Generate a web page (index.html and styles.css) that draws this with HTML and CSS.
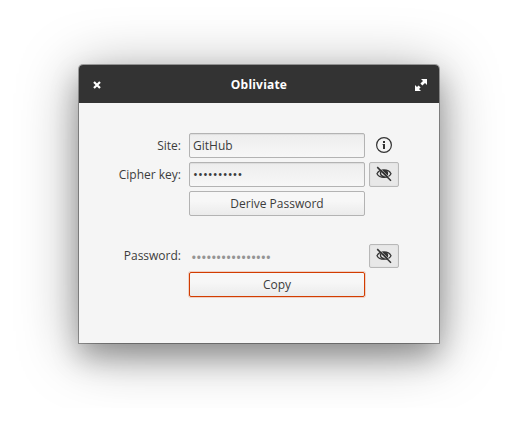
FILE: index.html
```html
<!DOCTYPE html>
<html lang="en">
<head>
<meta charset="utf-8">
<title>Obliviate</title>
<link rel="stylesheet" href="styles.css">
</head>
<body>
<svg width="0" height="0" class="defs">
  <symbol id="eye" viewBox="0 0 16 16">
    <path d="M1 7.7C3.5 2.7 12.5 2.7 15 7.7C12.5 12.4 3.5 12.4 1 7.7Z" fill="none" stroke="#333" stroke-width="1.3"/>
    <path d="M4.6 5.4C4 8.7 5.5 10.5 8.5 10.8" fill="none" stroke="#333" stroke-width="1.4"/>
    <path d="M6.5 4H10.5C12.6 5.5 12.8 8.5 11 10.6L8.5 8.5L6.2 6C6.6 5.6 6.8 4.8 6.5 4Z" fill="#333"/>
    <path d="M2.3 .4L16.1 14.2" stroke="#e8e8e8" stroke-width=".5"/>
    <path d="M1.2 1.1L15 14.8" stroke="#333" stroke-width="1.5"/>
  </symbol>
</svg>
<main class="window">
  <header class="titlebar">
    <svg class="close" viewBox="0 0 8 8"><path d="M1 1L7 7M7 1L1 7" stroke="#fff" stroke-width="2.2"/></svg>
    <h1>Obliviate</h1>
    <svg class="maximize" viewBox="0 0 12 12"><path d="M6 0H12V6L10 4L7.4 6.6L5.4 4.6L8 2ZM0 6L2 8L3.6 6.4L5.6 8.4L4 10L6 12H0Z" fill="#fff"/></svg>
  </header>
  <div class="form">
    <span class="label">Site:</span>
    <div class="entry">GitHub</div>
    <svg class="info" viewBox="0 0 16 16"><circle cx="8" cy="8" r="7.4" fill="none" stroke="#333" stroke-width="1.2"/><path d="M7 4H9V6H7ZM6.6 7H9V12H7V8H6.6Z" fill="#333"/></svg>

    <span class="label">Cipher key:</span>
    <div class="entry dots">••••••••••</div>
    <button class="toggle" aria-label="Show cipher key"><svg><use href="#eye"/></svg></button>

    <button class="button derive">Derive Password</button>

    <span class="label result">Password:</span>
    <div class="dots hidden-password result">••••••••••••••••</div>
    <button class="toggle result" aria-label="Show password"><svg><use href="#eye"/></svg></button>

    <button class="button copy">Copy</button>
  </div>
</main>
</body>
</html>
```
FILE: styles.css
```css
* { box-sizing: border-box; }

body {
  margin: 0;
  padding: 65px 79px;
  background: #fff;
  color: #3c3c3c;
  font: 12px/17px "Open Sans", "Noto Sans", sans-serif;
}

.defs { display: none; }

.window {
  width: 360px;
  height: 278px;
  border-radius: 4px 4px 0 0;
  background: #f5f5f5;
  box-shadow: 0 0 0 1px rgba(0, 0, 0, .32), 0 14px 28px rgba(0, 0, 0, .27), 0 8px 60px rgba(0, 0, 0, .36);
}

.titlebar {
  display: flex;
  align-items: center;
  justify-content: space-between;
  height: 38px;
  padding: 0 12px 0 14px;
  border-radius: 4px 4px 0 0;
  background: #333;
  color: #fff;
}

.titlebar h1 {
  margin: 0;
  font-size: 12px;
  font-weight: 700;
  letter-spacing: .2px;
}

.close { width: 8px; height: 8px; margin: 2px 2px 0 0; }
.maximize { width: 12px; height: 12px; margin-top: 2px; }

.form {
  display: grid;
  grid-template-columns: 102px 176px 30px;
  grid-template-rows: 25px 25px 25px 48px 25px;
  gap: 4px 8px;
  padding-top: 30px;
}

.label {
  grid-column: 1;
  align-self: center;
  justify-self: end;
}

.entry {
  height: 25px;
  padding: 3px;
  border: 1px solid #b3b3b3;
  border-radius: 2px;
  background: linear-gradient(#ededed, #f7f7f7);
  box-shadow: inset 0 1px 1px rgba(0, 0, 0, .07);
}

.dots {
  font-size: 13px;
  letter-spacing: .06px;
  white-space: nowrap;
}

.info { width: 16px; height: 16px; margin: 4px 0 0 3px; }

.toggle {
  display: flex;
  align-items: center;
  justify-content: center;
  width: 30px;
  height: 25px;
  margin-left: -4px;
  padding: 0 0 1px;
  border: 1px solid #b8b8b8;
  border-radius: 2px;
  background: #e8e8e8;
  box-shadow: inset 0 0 2px rgba(0, 0, 0, .07);
}

.toggle svg { width: 16px; height: 16px; }

.button {
  height: 25px;
  padding: 0 0 1px;
  border: 1px solid #b3b3b3;
  border-radius: 2px;
  background: linear-gradient(#f7f7f7 40%, #ebebeb);
  color: inherit;
  font: inherit;
}

.derive, .copy { grid-column: 2; }

.result { align-self: end; }
.label.result { margin-bottom: 4px; }
.toggle.result { height: 24px; }

.hidden-password {
  padding: 0 2px 2px;
  color: #949494;
  font-size: 15px;
  letter-spacing: -.67px;
}

.copy {
  border-color: #d23c00;
  box-shadow: 0 0 0 1px rgba(210, 60, 0, .2);
}
```
